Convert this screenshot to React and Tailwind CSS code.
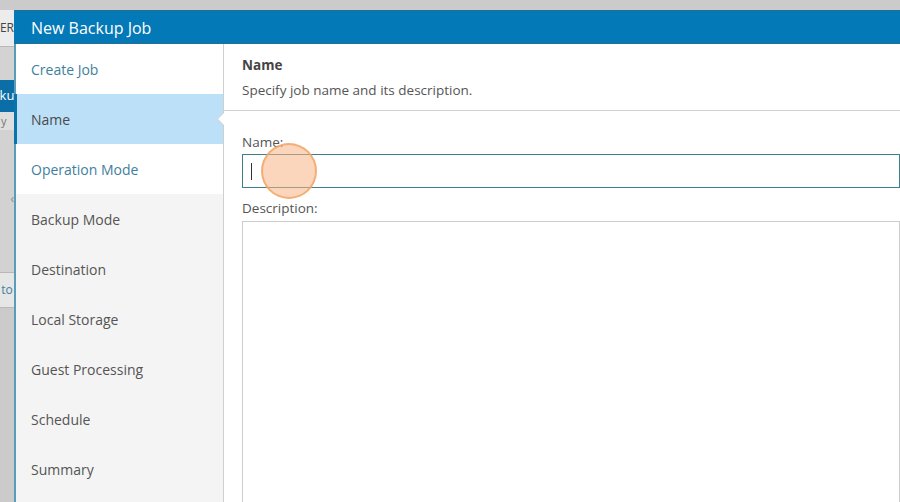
import React from 'react'

const steps = [
  { label: 'Create Job', state: 'done' },
  { label: 'Name', state: 'active' },
  { label: 'Operation Mode', state: 'next' },
  { label: 'Backup Mode', state: 'todo' },
  { label: 'Destination', state: 'todo' },
  { label: 'Local Storage', state: 'todo' },
  { label: 'Guest Processing', state: 'todo' },
  { label: 'Schedule', state: 'todo' },
  { label: 'Summary', state: 'todo' },
]

const StepItem = ({ step }) => {
  if (step.state === 'active') {
    return (
      <div className="relative h-[50px] flex items-center bg-[#bde0f9] border-l-[3px] border-[#0a73ad] ml-[-2px] pl-[14px] text-[#4a4a4a]">
        {step.label}
        {/* notch pointing into the form panel */}
        <div className="absolute right-[-1px] top-[18px] w-0 h-0 border-y-[7px] border-y-transparent border-r-[7px] border-r-[#cfcfcf]" />
        <div className="absolute right-[-1px] top-[19px] w-0 h-0 border-y-[6px] border-y-transparent border-r-[6px] border-r-white" />
      </div>
    )
  }
  const tone =
    step.state === 'todo'
      ? 'bg-[#f4f4f4] text-[#555555]'
      : 'bg-white text-[#3f7f9c]'
  return (
    <div className={`h-[50px] flex items-center pl-[15px] ${tone}`}>{step.label}</div>
  )
}

// slice of the main window peeking out behind the dialog
const BackdropStrip = () => (
  <div className="w-[14px] shrink-0 flex flex-col overflow-hidden text-[12px]">
    <div className="h-[10px] bg-[#cbcbcb]" />
    <div className="h-[37px] bg-[#ececec] flex items-center justify-end text-[#444] border-b border-[#b8b8b8]">
      <span className="whitespace-nowrap">ER</span>
    </div>
    <div className="h-[33px] bg-[#d3d3d3]" />
    <div className="h-[32px] bg-[#0b6ea6] flex items-center justify-center text-white text-[13px]">
      <span className="whitespace-nowrap">ku</span>
    </div>
    <div className="h-[18px] bg-[#dedede] text-[#777] text-[11px] leading-[18px] pl-[1px]">y</div>
    <div className="h-[142px] bg-[#d2d2d2] flex justify-end pt-[60px] text-[#888] text-[12px]">‹</div>
    <div className="h-[36px] bg-[#e6e6e6] border-y border-[#b8b8b8] flex items-center justify-center text-[#3f7f9c]">
      <span className="whitespace-nowrap">to</span>
    </div>
    <div className="flex-1 bg-[#cbcbcb]" />
  </div>
)

export default function App() {
  return (
    <div
      className="relative w-[900px] h-[502px] overflow-hidden bg-[#cbcbcb] flex"
      style={{ fontFamily: '"Open Sans", "Noto Sans", sans-serif' }}
    >
      <BackdropStrip />

      <div className="flex-1 mt-[10px] flex flex-col min-w-0">
        {/* dialog title bar */}
        <div className="h-[34px] shrink-0 bg-[#0479b7] border-y border-[#2a6d8f] flex items-center pl-[17px] pt-[1px] text-white text-[16px]">
          New Backup Job
        </div>

        <div className="flex-1 flex min-h-0">
          {/* wizard steps */}
          <div className="w-[210px] shrink-0 flex flex-col text-[14px] border-l-2 border-[#5b9db9] border-r border-r-[#cfcfcf] bg-[#f4f4f4]">
            {steps.map((step) => (
              <StepItem key={step.label} step={step} />
            ))}
          </div>

          {/* form panel */}
          <div className="flex-1 bg-white flex flex-col text-[13.5px] text-[#555555]">
            <div className="h-[67px] shrink-0 border-b border-[#d0d0d0] pl-[18px] pt-[11px]">
              <div className="font-bold text-[#444]">Name</div>
              <div className="mt-[5px]">Specify job name and its description.</div>
            </div>

            <div className="pl-[18px] pt-[22px] flex flex-col">
              <label className="leading-[18px]">Name:</label>
              <div className="relative mt-[3px] h-[34px] border border-[#3d7f8f] flex items-center pl-[8px]">
                <span className="w-px h-[17px] bg-[#333]" />
                {/* click indicator */}
                <div className="absolute left-[18px] top-[-12px] w-[56px] h-[56px] rounded-full bg-[#f8b585]/55 border-2 border-[#f2a463]/80" />
              </div>
              <label className="mt-[11px] leading-[18px]">Description:</label>
              <div className="mt-[4px] h-[300px] border border-[#cccccc]" />
            </div>
          </div>
        </div>
      </div>
    </div>
  )
}
